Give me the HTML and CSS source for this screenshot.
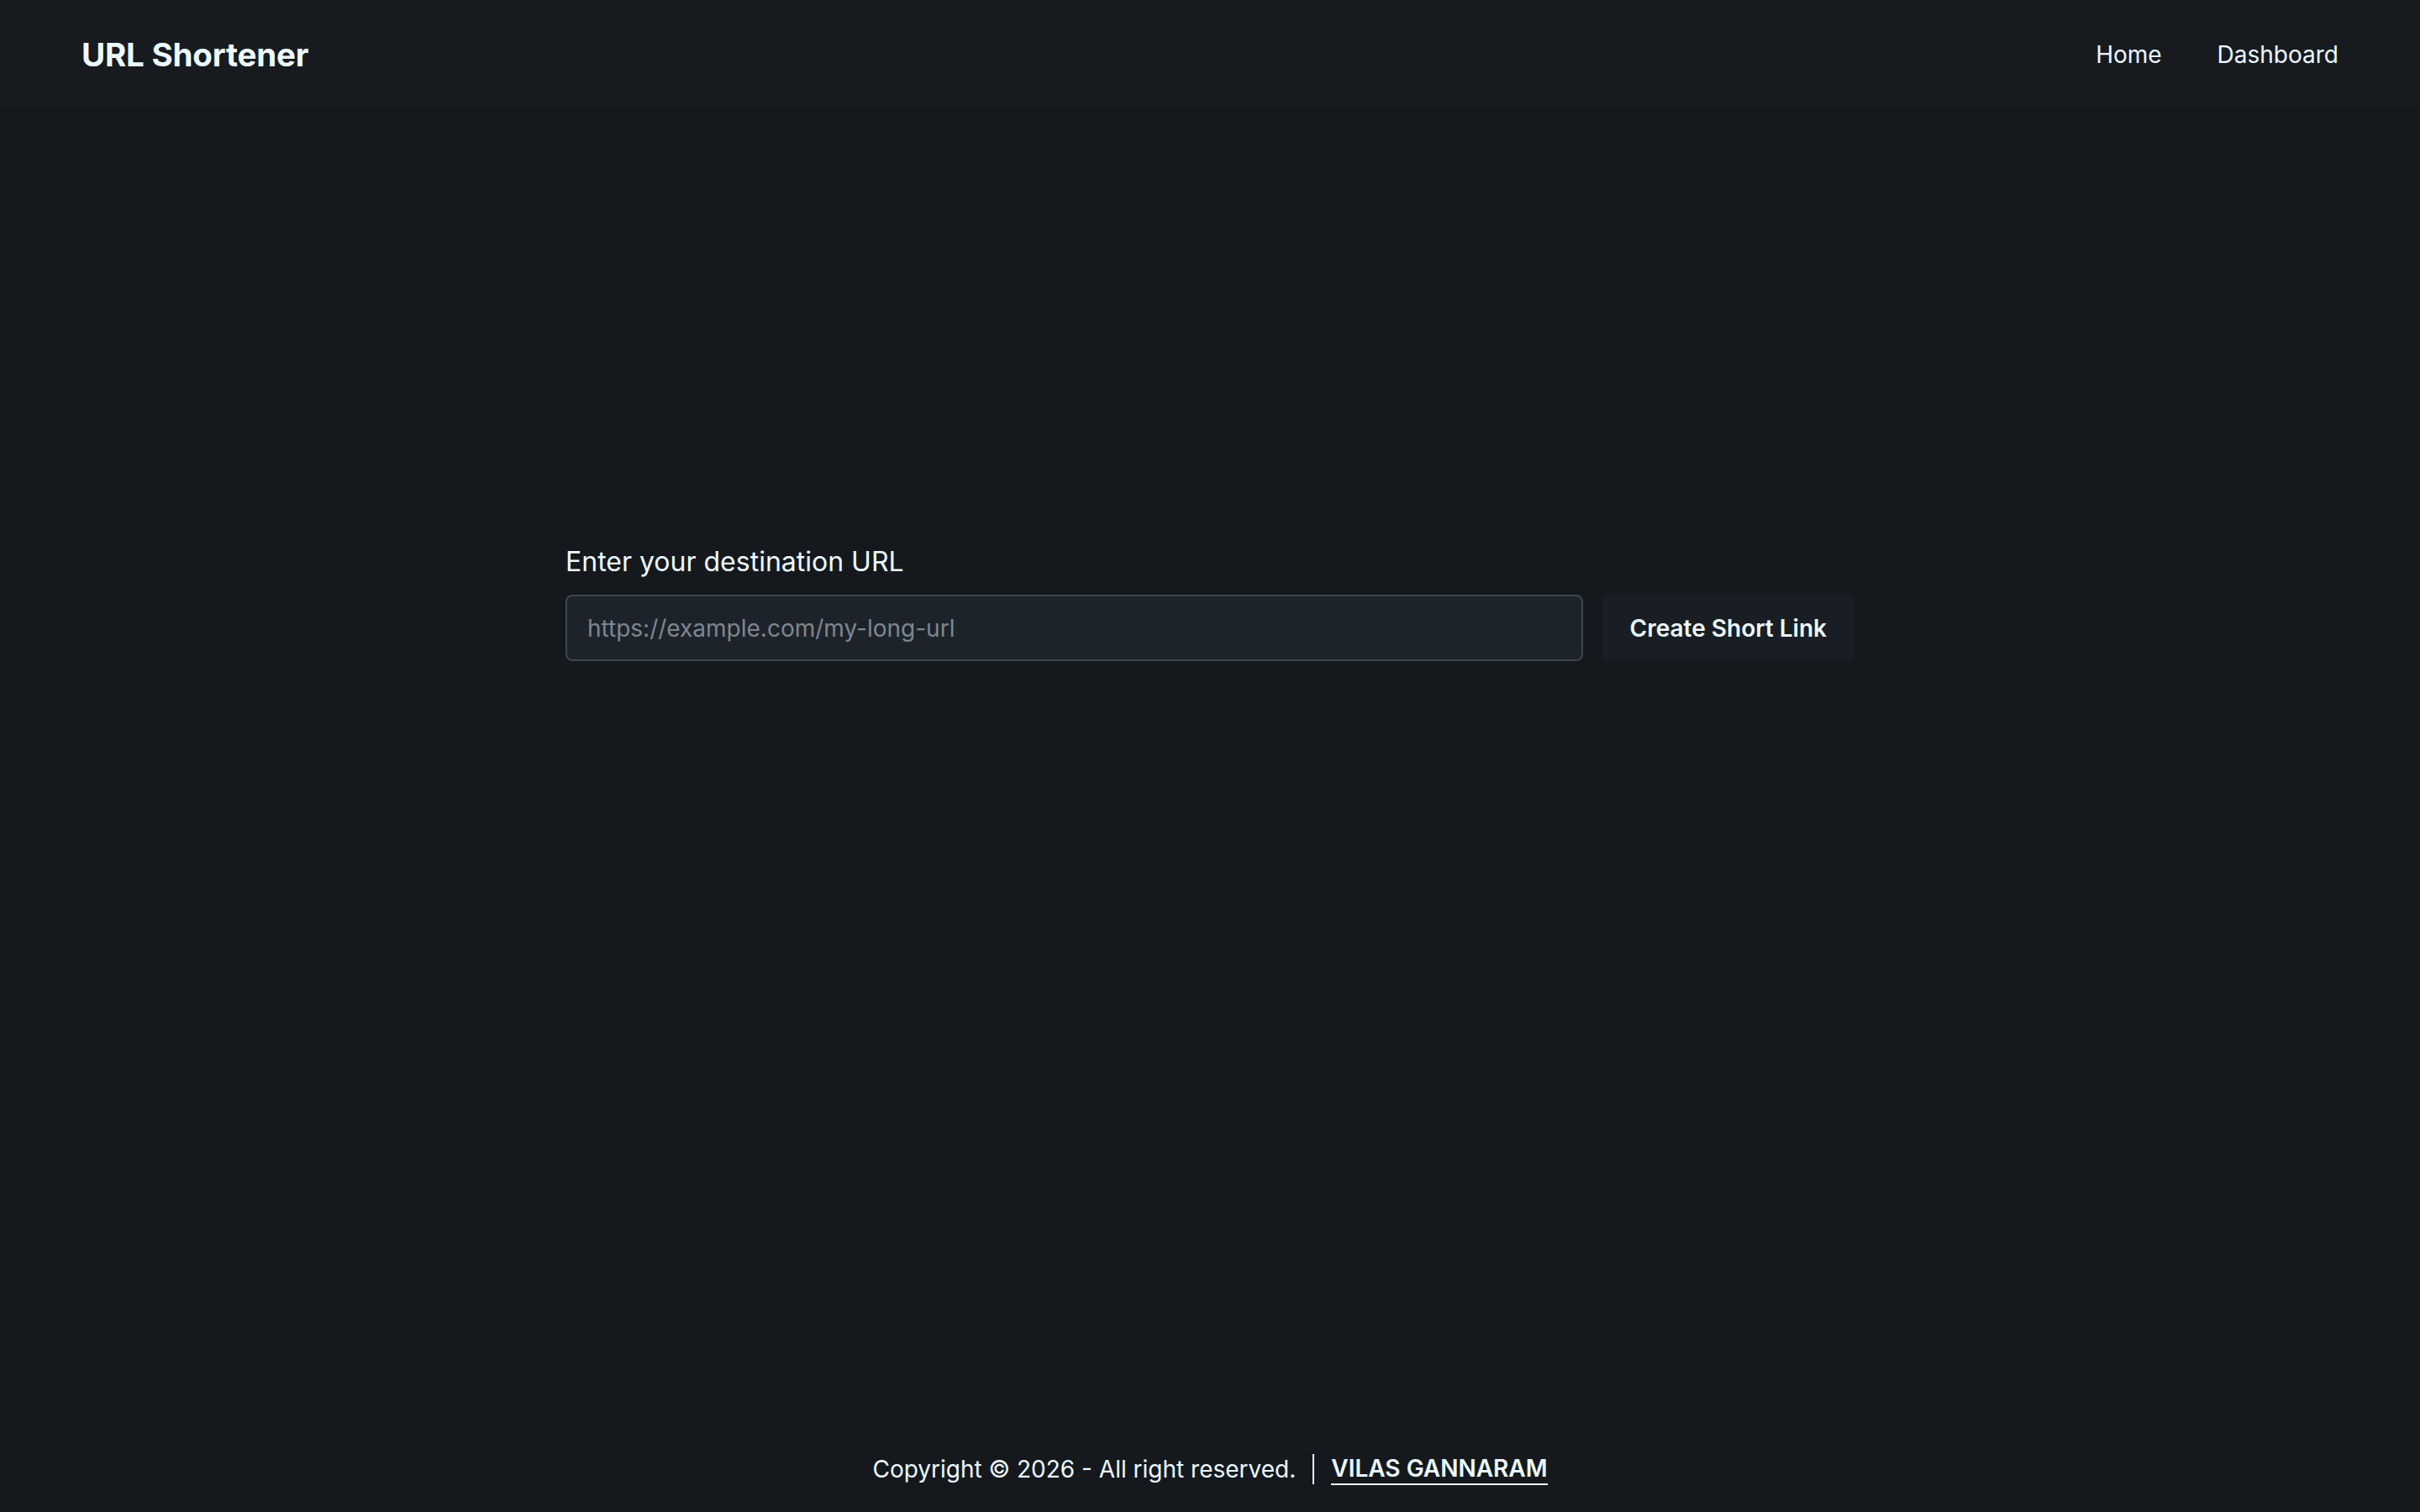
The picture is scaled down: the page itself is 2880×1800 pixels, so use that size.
FILE: index.html
```html
<!DOCTYPE html>
<html lang="en">
<head>
    <meta charset="UTF-8">
    <meta name="viewport" content="width=device-width, initial-scale=1.0">
    <title>URL Shortener</title>
    <link rel="stylesheet" href="styles.css">
</head>
<body>
    <header class="navbar">
        <a href="#" class="logo">URL Shortener</a>
        <nav class="nav-links">
            <a href="#">Home</a>
            <a href="#">Dashboard</a>
        </nav>
    </header>

    <main class="main">
        <form class="shorten-form" id="shortenForm">
            <label for="url" class="form-label">Enter your destination URL</label>
            <div class="form-row">
                <input type="text" id="url" placeholder="https://example.com/my-long-url">
                <button type="submit">Create Short Link</button>
            </div>
        </form>
    </main>

    <footer class="footer">
        <span>Copyright &copy; 2026 - All right reserved.</span>
        <span class="divider"></span>
        <a href="#" class="author">VILAS GANNARAM</a>
    </footer>
</body>
</html>
```

FILE: styles.css
```css
html, body {
    margin: 0;
    padding: 0;
}

body {
    font-family: 'Inter', 'Noto Sans', sans-serif;
    background-color: #15191e;
    color: #ecf9ff;
    min-height: 100vh;
    display: flex;
    flex-direction: column;
}

a {
    color: inherit;
    text-decoration: none;
}

.navbar {
    height: 130px;
    box-sizing: border-box;
    padding: 0 97px;
    display: flex;
    align-items: center;
    justify-content: space-between;
    background-color: #171b20;
    box-shadow: 0 2px 4px rgba(0, 0, 0, 0.18);
}

.logo {
    font-size: 38.5px;
    font-weight: 700;
    letter-spacing: -0.2px;
}

.nav-links {
    display: flex;
    gap: 66px;
}

.nav-links a {
    font-size: 28px;
}

.main {
    flex: 1;
    padding-top: 515px;
}

.shorten-form {
    width: 1534px;
    margin: 0 auto;
}

.form-label {
    display: block;
    font-size: 32px;
    line-height: 48px;
    margin-bottom: 15px;
}

.form-row {
    display: flex;
    gap: 23px;
}

.form-row input {
    flex: 1;
    height: 79px;
    box-sizing: border-box;
    padding: 0 24px;
    font-family: inherit;
    font-size: 28px;
    color: #ecf9ff;
    background-color: #1d232a;
    border: 2px solid #40464e;
    border-radius: 8px;
    outline: none;
}

.form-row input::placeholder {
    color: #7f868f;
}

.form-row button {
    height: 79px;
    padding: 0 33px;
    font-family: inherit;
    font-size: 28px;
    font-weight: 600;
    color: #ecf9ff;
    background-color: #191e24;
    border: none;
    border-radius: 8px;
    cursor: pointer;
}

.footer {
    display: flex;
    justify-content: center;
    align-items: center;
    gap: 20px;
    font-size: 28px;
    line-height: 40px;
    padding-bottom: 31px;
}

.divider {
    width: 2px;
    height: 36px;
    background-color: #ecf9ff;
}

.author {
    font-weight: 600;
    border-bottom: 2px solid #ecf9ff;
    line-height: 36px;
}
```
